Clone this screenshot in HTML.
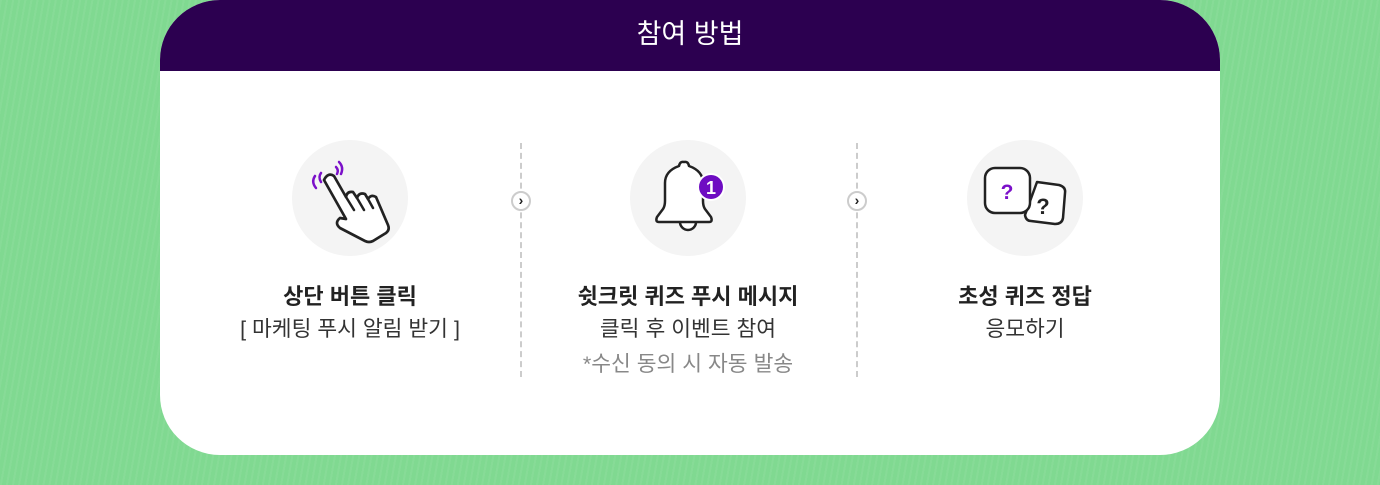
<!DOCTYPE html>
<html><head><meta charset="utf-8"><style>
*{margin:0;padding:0;box-sizing:border-box}
body{width:1380px;height:485px;overflow:hidden;background:#80d991;font-family:"Liberation Sans","Noto Sans CJK KR",sans-serif;position:relative}
.bg{position:absolute;inset:0;background-image:repeating-linear-gradient(100deg,rgba(255,255,255,.06) 0 2px,transparent 2px 6px);}
.card{position:absolute;left:160px;top:0;width:1060px;height:455px;background:#fff;border-radius:60px;overflow:hidden}
.hd{height:71px;background:#2c0050;color:#fff;font-size:27px;text-align:center;line-height:68px}
.col{position:absolute;top:140px;width:340px;text-align:center}
.circ{width:116px;height:116px;border-radius:50%;background:#f4f4f4;margin:0 auto;position:relative}
.circ svg{position:absolute;left:0;top:0}
.t1{margin-top:26px;font-size:22px;font-weight:bold;color:#222;line-height:30px}
.t2{font-size:21.5px;color:#333;line-height:35px}
.t3{font-size:21.5px;color:#888;line-height:34px}
.dv{position:absolute;top:143px;height:234px;border-left:2px dashed #ccc}
.ar{position:absolute;top:191px;width:20px;height:20px;border-radius:50%;border:2px solid #ccc;background:#fff;font-size:14px;font-weight:bold;line-height:14px;text-align:center;color:#222}
</style></head><body><div class="bg"></div>
<div class="card">
<div class="hd">참여 방법</div>
<div class="col" style="left:20px">
<div class="circ"><svg width="116" height="116" viewBox="0 0 116 116">
<g fill="none" stroke="#7b10c9" stroke-width="2.5" stroke-linecap="round"><path d="M23 36q-4 6 1 12"/><path d="M29 33q-3 4 0 9"/><path d="M47 22q5 5 2 12"/><path d="M44 27q3 3 1 7"/></g>
<path d="M32 40q4-8 10-4l12 21q1-6 7-5l4 6q2-6 8-4l3 5q3-5 8-2l12 28q2 5-2 8l-13 8q-4 2-8 0l-25-13q-6-5 0-10l6 1-22-39z" fill="#fff" stroke="#222" stroke-width="2.7" stroke-linejoin="round"/>
<g stroke="#222" stroke-width="2.5" stroke-linecap="round"><path d="M54 57l8 13"/><path d="M65 58l7 12"/><path d="M76 59l5 9"/></g></svg></div>
<div class="t1">상단 버튼 클릭</div><div class="t2">[ 마케팅 푸시 알림 받기 ]</div></div>
<div class="dv" style="left:360px"></div><div class="ar" style="left:351px">›</div>
<div class="col" style="left:358px">
<div class="circ"><svg width="116" height="116" viewBox="0 0 116 116">
<path d="M50 82a8 8 0 0 0 16 0" fill="#fff" stroke="#222" stroke-width="2.5"/>
<path d="M29 82q-4 0-2-5l6-8q2-3 2-8v-18q0-12 14-17q1-5 5-4q4-1 5 4q14 5 14 17v18q0 5 2 8l6 8q2 5-2 5z" fill="#fff" stroke="#222" stroke-width="2.5" stroke-linejoin="round"/>
<circle cx="81" cy="47" r="14" fill="#fff"/><circle cx="81" cy="47" r="12" fill="#6e0cc2"/>
<text x="81" y="54" font-size="18" font-weight="bold" fill="#fff" text-anchor="middle" font-family="Liberation Sans">1</text></svg></div>
<div class="t1">쉿크릿 퀴즈 푸시 메시지</div><div class="t2">클릭 후 이벤트 참여</div><div class="t3">*수신 동의 시 자동 발송</div></div>
<div class="dv" style="left:696px"></div><div class="ar" style="left:687px">›</div>
<div class="col" style="left:695px">
<div class="circ"><svg width="116" height="116" viewBox="0 0 116 116">
<path d="M70 42l22 3q7 2 6 8l-2 25q-1 6-8 6l-24-3q-5 0-6-6z" fill="#fff" stroke="#222" stroke-width="2.5" stroke-linejoin="round"/>
<rect x="18" y="28" width="45" height="45" rx="10" fill="#fff" stroke="#222" stroke-width="2.5"/>
<text x="40" y="59" font-size="21" font-weight="bold" fill="#7b10c9" text-anchor="middle" font-family="Liberation Sans">?</text>
<text x="76" y="74" font-size="22" font-weight="bold" fill="#222" text-anchor="middle" font-family="Liberation Sans">?</text></svg></div>
<div class="t1">초성 퀴즈 정답</div><div class="t2">응모하기</div></div>
</div></body></html>
